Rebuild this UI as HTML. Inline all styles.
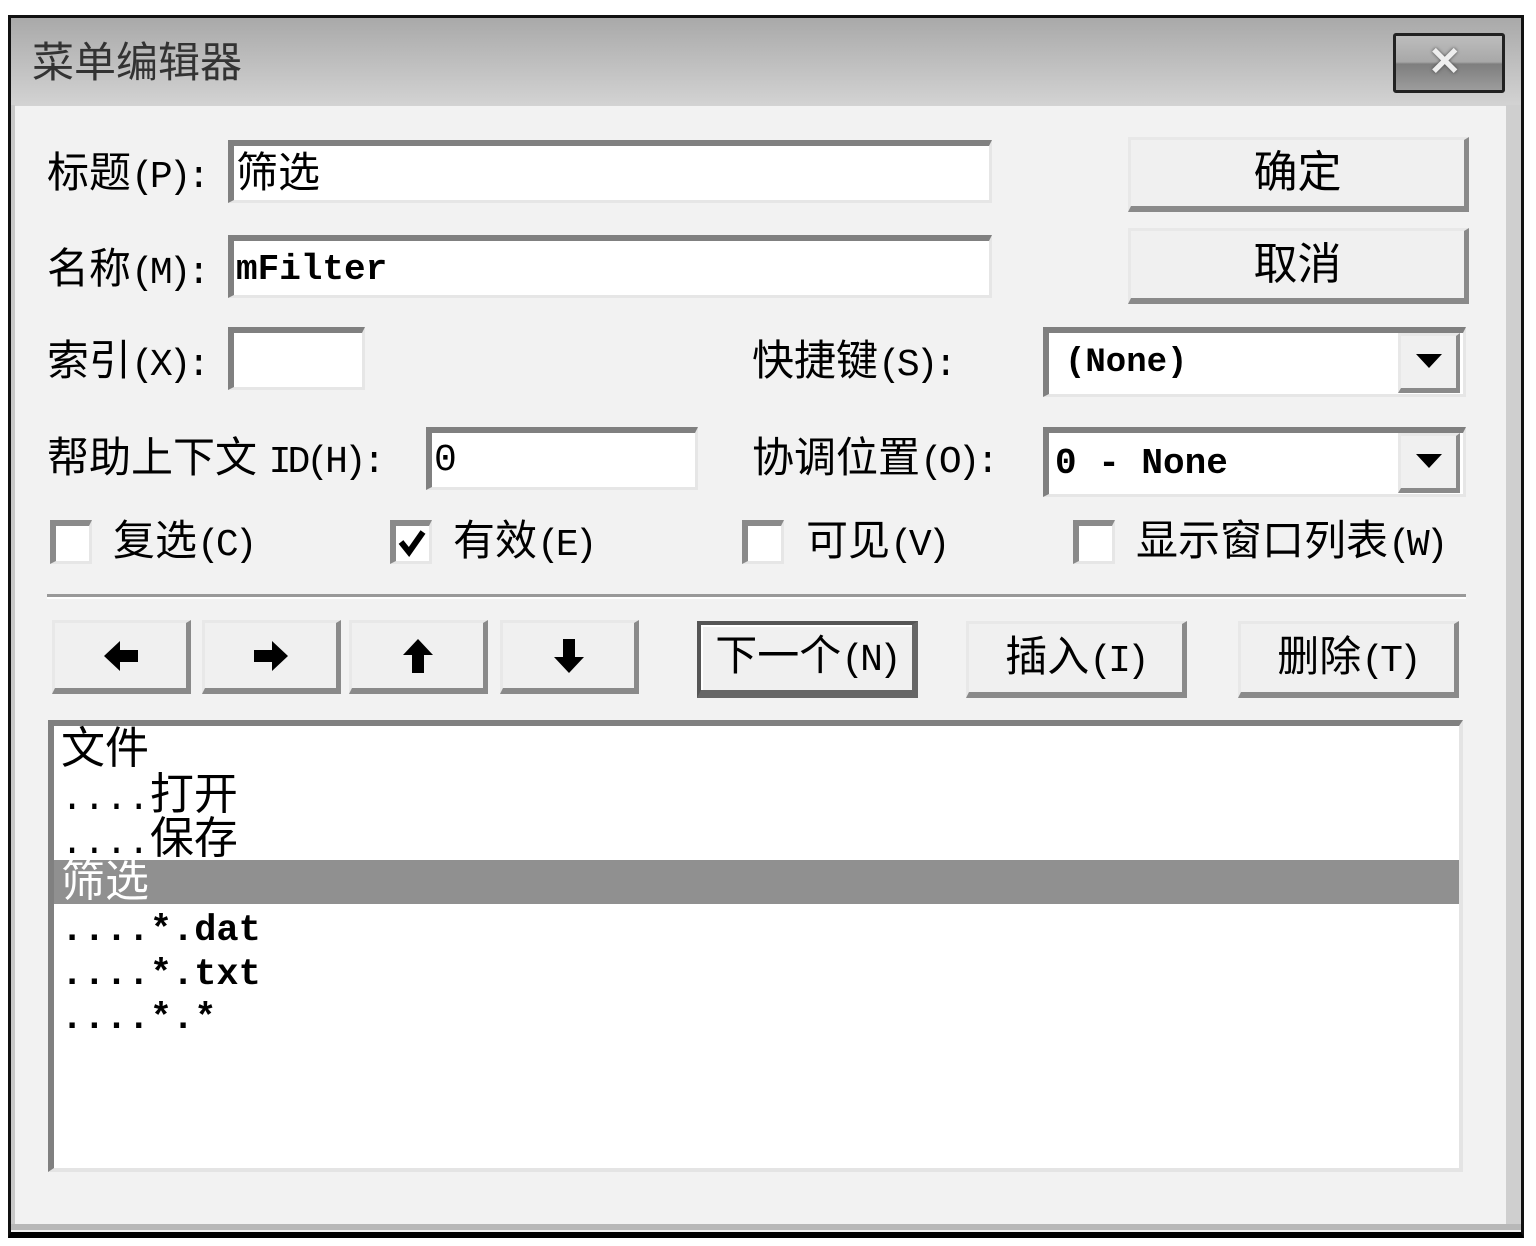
<!DOCTYPE html>
<html><head><meta charset="utf-8"><style>
html,body{margin:0;padding:0;background:#fff;width:1536px;height:1246px;overflow:hidden}
*{box-sizing:border-box}
.a{position:absolute}
.t{position:absolute;font-family:"Liberation Sans","Noto Sans CJK SC",sans-serif;font-size:42px;color:#000;white-space:nowrap;line-height:1}
.m{font-family:"Liberation Mono","Noto Sans CJK SC",monospace;font-size:38px;letter-spacing:-4px}
.mb{font-family:"Liberation Mono","Noto Sans CJK SC",monospace;font-size:36px;font-weight:bold}
.in{position:absolute;background:#fff;border-top:6px solid #808080;border-left:6px solid #808080;border-right:3px solid #e6e6e6;border-bottom:3px solid #e6e6e6}
.btn{position:absolute;background:#f0f0f0;border-top:3px solid #e8e8e8;border-left:3px solid #e8e8e8;border-right:5px solid #8a8a8a;border-bottom:6px solid #8a8a8a;display:flex;align-items:center;justify-content:center}
.cb{position:absolute;width:42px;height:44px;background:#fff;border-top:6px solid #8a8a8a;border-left:6px solid #8a8a8a;border-right:3px solid #e6e6e6;border-bottom:3px solid #e6e6e6}
</style></head><body>
<div class="a" style="left:8px;top:15px;width:1516px;height:1223px;background:#f2f2f2;border:3px solid #111;border-bottom:6px solid #000;"></div>
<div class="a" style="left:11px;top:18px;width:1510px;height:88px;background:linear-gradient(#a9a9a9,#d3d3d3);"></div>
<div class="a" style="left:1506px;top:105px;width:15px;height:1125px;background:#cfcfcf"></div>
<div class="a" style="left:11px;top:105px;width:4px;height:1125px;background:#c8c8c8"></div>
<div class="a" style="left:11px;top:1224px;width:1510px;height:6px;background:#b8b8b8"></div>
<div class="t" style="left:32px;top:42px;font-size:42px;color:#333">菜单编辑器</div>
<div class="a" style="left:1393px;top:33px;width:112px;height:60px;border:3px solid #222;border-radius:3px;background:linear-gradient(#bdbdbd 0%,#a8a8a8 48%,#7e7e7e 52%,#9c9c9c 100%)"></div>
<div class="t" style="left:1428px;top:42px;font-size:40px;font-weight:bold;color:#eee;font-family:'Liberation Sans',sans-serif;text-shadow:0 0 3px #444">✕</div>

<div class="t" style="left:47px;top:152px">标题<span class="m">(P):</span></div>
<div class="in" style="left:228px;top:140px;width:764px;height:63px"></div>
<div class="t" style="left:236px;top:152px">筛选</div>

<div class="t" style="left:47px;top:248px">名称<span class="m">(M):</span></div>
<div class="in" style="left:228px;top:235px;width:764px;height:63px"></div>
<div class="t mb" style="left:236px;top:252px;font-size:36px">mFilter</div>

<div class="t" style="left:47px;top:340px">索引<span class="m">(X):</span></div>
<div class="in" style="left:228px;top:327px;width:137px;height:63px"></div>

<div class="t" style="left:47px;top:437px">帮助上下文 <span class="m">ID(H):</span></div>
<div class="in" style="left:426px;top:427px;width:272px;height:63px"></div>
<div class="t m" style="left:434px;top:442px;font-size:38px">0</div>

<div class="t" style="left:752px;top:340px">快捷键<span class="m">(S):</span></div>
<div class="in" style="left:1043px;top:327px;width:423px;height:70px"></div>
<div class="t mb" style="left:1065px;top:346px;font-size:34px">(None)</div>
<div class="btn" style="left:1398px;top:333px;width:62px;height:60px;border-right-width:4px;border-bottom-width:5px"><svg width="26" height="16"><path d="M0 0H26L13 14Z" fill="#000"/></svg></div>

<div class="t" style="left:752px;top:437px">协调位置<span class="m">(O):</span></div>
<div class="in" style="left:1043px;top:427px;width:423px;height:70px"></div>
<div class="t mb" style="left:1055px;top:446px;font-size:36px">0 - None</div>
<div class="btn" style="left:1398px;top:433px;width:62px;height:60px;border-right-width:4px;border-bottom-width:5px"><svg width="26" height="16"><path d="M0 0H26L13 14Z" fill="#000"/></svg></div>

<div class="btn" style="left:1128px;top:137px;width:341px;height:75px"><span class="t" style="position:static;font-size:44px">确定</span></div>
<div class="btn" style="left:1128px;top:228px;width:341px;height:76px"><span class="t" style="position:static;font-size:44px">取消</span></div>

<div class="cb" style="left:50px;top:520px"></div>
<div class="t" style="left:113px;top:520px">复选<span class="m">(C)</span></div>
<div class="cb" style="left:390px;top:520px"></div>
<svg class="a" style="left:398px;top:528px" width="28" height="30"><path d="M3 14L11 24L25 4" stroke="#000" stroke-width="6" fill="none"/></svg>
<div class="t" style="left:453px;top:520px">有效<span class="m">(E)</span></div>
<div class="cb" style="left:742px;top:520px"></div>
<div class="t" style="left:806px;top:520px">可见<span class="m">(V)</span></div>
<div class="cb" style="left:1073px;top:520px"></div>
<div class="t" style="left:1136px;top:520px">显示窗口列表<span class="m">(W)</span></div>

<div class="a" style="left:47px;top:594px;width:1419px;height:3px;background:#999"></div>
<div class="a" style="left:47px;top:597px;width:1419px;height:2px;background:#fff"></div>

<div class="btn" style="left:52px;top:620px;width:139px;height:74px"><svg width="34" height="34"><path d="M0 17L16 2V11H34V23H16V32Z" fill="#000"/></svg></div>
<div class="btn" style="left:202px;top:620px;width:139px;height:74px"><svg width="34" height="34"><path d="M34 17L18 2V11H0V23H18V32Z" fill="#000"/></svg></div>
<div class="btn" style="left:349px;top:620px;width:139px;height:74px"><svg width="34" height="34"><path d="M17 0L2 16H11V34H23V16H32Z" fill="#000"/></svg></div>
<div class="btn" style="left:500px;top:620px;width:139px;height:74px"><svg width="34" height="34"><path d="M17 34L2 18H11V0H23V18H32Z" fill="#000"/></svg></div>
<div class="btn" style="left:697px;top:621px;width:221px;height:77px;border:4px solid #555;border-bottom:8px solid #666;border-right:6px solid #666;box-shadow:inset 2px 2px 0 #fff"><span class="t" style="position:static">下一个<span class="m">(N)</span></span></div>
<div class="btn" style="left:966px;top:621px;width:221px;height:77px"><span class="t" style="position:static">插入<span class="m">(I)</span></span></div>
<div class="btn" style="left:1238px;top:621px;width:221px;height:77px"><span class="t" style="position:static">删除<span class="m">(T)</span></span></div>

<div class="a" style="left:48px;top:720px;width:1415px;height:452px;background:#fff;border-top:6px solid #808080;border-left:6px solid #808080;border-right:4px solid #e4e4e4;border-bottom:4px solid #e4e4e4"></div>
<div class="a" style="left:54px;top:860px;width:1405px;height:44px;background:#909090"></div>
<div class="t" style="left:61px;top:727px;font-size:44px">文件</div>
<div class="t" style="left:61px;top:773px;font-size:44px"><span class="m" style="font-size:37px;letter-spacing:0">....</span>打开</div>
<div class="t" style="left:61px;top:817px;font-size:44px"><span class="m" style="font-size:37px;letter-spacing:0">....</span>保存</div>
<div class="t" style="left:61px;top:860px;font-size:44px;color:#fff">筛选</div>
<div class="t mb" style="left:61px;top:913px;font-size:37px">....*.dat</div>
<div class="t mb" style="left:61px;top:957px;font-size:37px">....*.txt</div>
<div class="t mb" style="left:61px;top:1001px;font-size:37px">....*.*</div>
</body></html>
